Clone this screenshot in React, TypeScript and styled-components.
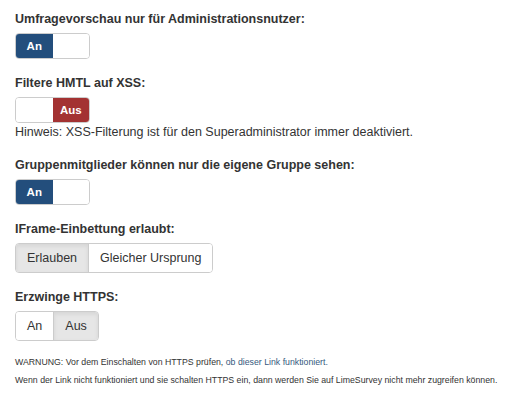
import styled, { createGlobalStyle } from 'styled-components';

const GlobalStyle = createGlobalStyle`
  body {
    margin: 0;
    background: #fff;
    color: #333;
    font-family: "Liberation Sans", Arial, sans-serif;
    font-size: 12.5px;
    line-height: 18px;
  }
`;

type SwitchProps = { on: boolean };

const Switch = ({ on }: SwitchProps) => (
  <SwitchBox>
    {on ? (
      <>
        <SwitchHalf $tone="on">An</SwitchHalf>
        <SwitchHalf $tone="blank" />
      </>
    ) : (
      <>
        <SwitchHalf $tone="blank" />
        <SwitchHalf $tone="off">Aus</SwitchHalf>
      </>
    )}
  </SwitchBox>
);

type GroupProps = { options: string[]; active: number };

const ButtonGroup = ({ options, active }: GroupProps) => (
  <Group>
    {options.map((o, i) => (
      <GroupButton key={o} $active={i === active}>
        {o}
      </GroupButton>
    ))}
  </Group>
);

export default function App() {
  return (
    <>
      <GlobalStyle />
      <Page>
        <FormGroup>
          <Label>Umfragevorschau nur für Administrationsnutzer:</Label>
          <Switch on />
        </FormGroup>
        <FormGroup>
          <Label>Filtere HMTL auf XSS:</Label>
          <Switch on={false} />
          <Hint>Hinweis: XSS-Filterung ist für den Superadministrator immer deaktiviert.</Hint>
        </FormGroup>
        <FormGroup>
          <Label>Gruppenmitglieder können nur die eigene Gruppe sehen:</Label>
          <Switch on />
        </FormGroup>
        <FormGroup>
          <Label>IFrame-Einbettung erlaubt:</Label>
          <ButtonGroup options={['Erlauben', 'Gleicher Ursprung']} active={0} />
        </FormGroup>
        <FormGroup>
          <Label>Erzwinge HTTPS:</Label>
          <ButtonGroup options={['An', 'Aus']} active={1} />
        </FormGroup>
        <Warning>
          <WarnLine>
            WARNUNG: Vor dem Einschalten von HTTPS prüfen, <WarnLink>ob dieser Link funktioniert.</WarnLink>
          </WarnLine>
          <WarnLine>
            Wenn der Link nicht funktioniert und sie schalten HTTPS ein, dann werden Sie auf LimeSurvey nicht mehr zugreifen können.
          </WarnLine>
        </Warning>
      </Page>
    </>
  );
}

const Page = styled.div`
  padding: 10px 15px;
`;

const FormGroup = styled.div`
  margin-bottom: 15px;
`;

const Label = styled.div`
  font-weight: bold;
  margin-bottom: 5px;
`;

const SwitchBox = styled.div`
  display: flex;
  width: 75px;
  height: 26px;
  box-sizing: border-box;
  border: 1px solid #ccc;
  border-radius: 4px;
  overflow: hidden;
`;

const SwitchHalf = styled.span<{ $tone: 'on' | 'off' | 'blank' }>`
  flex: 1;
  display: flex;
  align-items: center;
  justify-content: center;
  font-size: 11.5px;
  font-weight: bold;
  color: #fff;
  background: ${(p) => (p.$tone === 'on' ? '#234e7c' : p.$tone === 'off' ? '#a33232' : '#fff')};
`;

const Hint = styled.div``;

const Group = styled.div`
  display: inline-flex;
  height: 30px;
  box-sizing: border-box;
  border: 1px solid #ccc;
  border-radius: 4px;
  overflow: hidden;
`;

const GroupButton = styled.span<{ $active: boolean }>`
  display: flex;
  align-items: center;
  padding: 0 11px;
  background: ${(p) => (p.$active ? '#e6e6e6' : '#fff')};
  box-shadow: ${(p) => (p.$active ? 'inset 0 2px 4px rgba(0,0,0,0.08)' : 'none')};
  & + & {
    border-left: 1px solid #ccc;
  }
`;

const Warning = styled.div`
  margin-top: -3px;
  font-size: 8.75px;
  line-height: 18px;
`;

const WarnLine = styled.div``;

const WarnLink = styled.span`
  color: #36597d;
`;
